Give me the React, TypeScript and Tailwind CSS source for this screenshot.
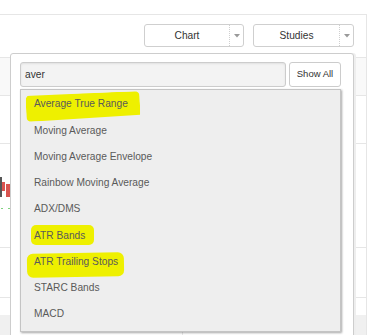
import React from "react";

const items = [
  { t: "Average True Range", hl: "row1" },
  { t: "Moving Average" },
  { t: "Moving Average Envelope" },
  { t: "Rainbow Moving Average" },
  { t: "ADX/DMS" },
  { t: "ATR Bands", hl: "row6" },
  { t: "ATR Trailing Stops", hl: "row7" },
  { t: "STARC Bands" },
  { t: "MACD" },
];

function Highlight({ kind }: { kind?: string }) {
  if (kind === "row1")
    return (
      <span className="absolute left-[5px] top-[2px] w-[114px] h-[27px] bg-[#eef000] rounded-[5px] -rotate-[2deg] [clip-path:polygon(0_4%,100%_0,100%_88%,0_100%)]" />
    );
  if (kind === "row6")
    return (
      <span className="absolute left-[10px] top-[3px] w-[63px] h-[20px] bg-[#eef000] rounded-[5px]" />
    );
  if (kind === "row7")
    return (
      <span className="absolute left-[6px] top-[4px] w-[97px] h-[24px] bg-[#eef000] rounded-[6px] -rotate-[1deg]" />
    );
  return null;
}

function SplitButton({ label, w }: { label: string; w: string }) {
  return (
    <div
      className={`${w} h-[23px] flex border border-[#cfcfcf] rounded-[3px] bg-white text-[#333] text-[10.2px]`}
    >
      <div className="flex-1 flex items-center justify-center">{label}</div>
      <div className="w-[14px] border-l border-dotted border-[#cfcfcf] flex items-center justify-center">
        <svg width="6" height="4" viewBox="0 0 6 4">
          <path d="M0 0 L6 0 L3 3.5 Z" fill="#9a9a9a" />
        </svg>
      </div>
    </div>
  );
}

export default function App() {
  return (
    <div
      className="relative w-[387px] h-[335px] overflow-hidden bg-white"
      style={{ fontFamily: '"Liberation Sans", Arial, sans-serif' }}
    >
      {/* background panel */}
      <div className="mt-[14px] w-[367px] border-t border-r border-[#e6e6e6]">
        <div className="h-[43px] border-b border-[#e6e6e6] flex justify-end gap-[9px] pt-[9px] pr-[12px]">
          <SplitButton label="Chart" w="w-[100px]" />
          <SplitButton label="Studies" w="w-[101px]" />
        </div>
        <div className="h-[38px] border-b border-[#e6e6e6] bg-[#f9f9f9]" />
        <div className="h-[48px] border-b border-[#e6e6e6]" />
        <div className="relative h-[104px] border-b border-[#e6e6e6]">
          <div className="absolute left-[0px] top-[33px] w-[2px] h-[20px] bg-[#555]" />
          <div className="absolute left-[2px] top-[38px] w-[3px] h-[9px] bg-[#d9534f]" />
          <div className="absolute left-[6px] top-[40px] w-[4px] h-[13px] bg-[#d9534f]" />
          <div className="absolute left-[1px] top-[64px] w-[2px] h-[1px] bg-[#7fd27f]" />
          <div className="absolute left-[8px] top-[64px] w-[2px] h-[1px] bg-[#7fd27f]" />
          <div className="absolute left-[353px] top-[125px] w-[3px] h-[13px] rounded-[1px] bg-[#7cc576]" />
        </div>
        <div className="h-[50px] border-b border-[#e6e6e6]" />
        <div className="h-[17px]" />
        <div className="h-[30px] bg-[#f0f0f0]" />
      </div>

      {/* dropdown overlay */}
      <div className="absolute left-[10px] top-[53px] w-[344px] h-[300px] bg-white border border-[#cdcdcd] rounded-t-[3px] shadow-[2px_0_0_#eeeeee] pl-[9px] pt-[8px]">
        <div className="flex gap-[3px]">
          <div className="w-[266px] h-[25px] bg-[#f3f3f3] border border-[#cccccc] rounded-[3px] shadow-[inset_0_1px_2px_rgba(0,0,0,0.08)] flex items-center pl-[4px] text-[10.2px] text-[#333]">
            aver
          </div>
          <div className="w-[52px] h-[25px] bg-white border border-[#cccccc] rounded-[3px] flex items-center justify-center text-[9.5px] text-[#333]">
            Show All
          </div>
        </div>
        <div className="relative mt-[2px] w-[321px] h-[243px] bg-[#eeeeee] border border-[#c4c4c4] shadow-[1px_1px_2px_rgba(0,0,0,0.35)] pt-[1px]">
          {items.map((it) => (
            <div
              key={it.t}
              className="relative h-[26.25px] flex items-center pl-[13px] text-[10.2px] text-[#5a5a5a]"
            >
              <Highlight kind={it.hl} />
              <span className="relative">{it.t}</span>
            </div>
          ))}
        </div>
        <div className="ml-[162px] w-px h-[20px] bg-[#e8e8e8]" />
      </div>
    </div>
  );
}
